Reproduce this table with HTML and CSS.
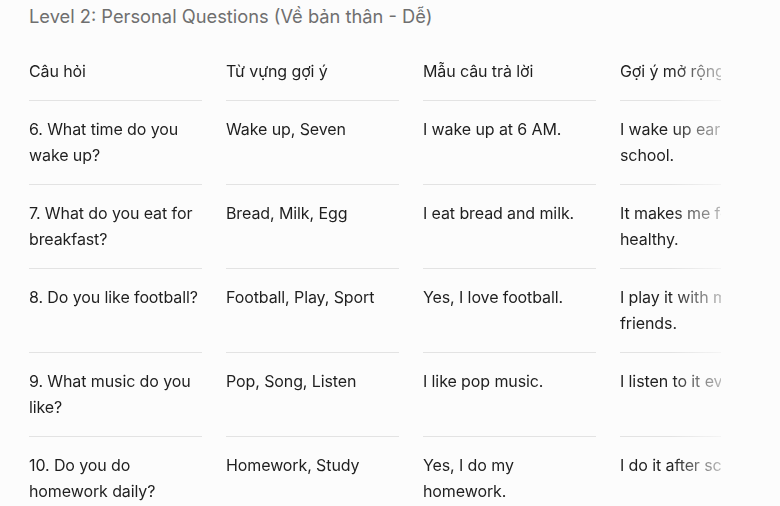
FILE: index.html
```html
<!DOCTYPE html>
<html lang="vi">
<head>
<meta charset="utf-8">
<link rel="stylesheet" href="styles.css">
</head>
<body>
<main class="page">
  <h3 class="title">Level 2: Personal Questions (Về bản thân - Dễ)</h3>
  <div class="scroller">
    <div class="table">
      <div class="cell head">Câu hỏi</div>
      <div class="cell head">Từ vựng gợi ý</div>
      <div class="cell head">Mẫu câu trả lời</div>
      <div class="cell head">Gợi ý mở rộng</div>

      <div class="cell">6. What time do you wake up?</div>
      <div class="cell">Wake up, Seven</div>
      <div class="cell">I wake up at 6 AM.</div>
      <div class="cell">I wake up early for school.</div>

      <div class="cell">7. What do you eat for breakfast?</div>
      <div class="cell">Bread, Milk, Egg</div>
      <div class="cell">I eat bread and milk.</div>
      <div class="cell">It makes me feel healthy.</div>

      <div class="cell">8. Do you like football?</div>
      <div class="cell">Football, Play, Sport</div>
      <div class="cell">Yes, I love football.</div>
      <div class="cell">I play it with my friends.</div>

      <div class="cell">9. What music do you like?</div>
      <div class="cell">Pop, Song, Listen</div>
      <div class="cell">I like pop music.</div>
      <div class="cell">I listen to it every day.</div>

      <div class="cell">10. Do you do homework daily?</div>
      <div class="cell">Homework, Study</div>
      <div class="cell">Yes, I do my homework.</div>
      <div class="cell">I do it after school.</div>
    </div>
  </div>
</main>
</body>
</html>
```
FILE: styles.css
```css
html, body {
  margin: 0;
  padding: 0;
  background: #fcfcfc;
}
body {
  font-family: Inter, "Noto Sans", sans-serif;
  color: #1f1f1f;
  overflow: hidden;
}
.page {
  padding-left: 29px;
}
.title {
  box-sizing: border-box;
  margin: 0;
  padding-top: 2px;
  height: 43px;
  font-size: 18.3px;
  line-height: 28px;
  font-weight: 400;
  color: #6f6f6f;
}
.scroller {
  width: 692px;
  overflow: hidden;
  -webkit-mask-image: linear-gradient(to right, #000 calc(100% - 50px), rgba(0, 0, 0, 0.3));
  mask-image: linear-gradient(to right, #000 calc(100% - 50px), rgba(0, 0, 0, 0.3));
}
.table {
  display: grid;
  grid-template-columns: repeat(4, 173px);
  column-gap: 24px;
  width: max-content;
}
.cell {
  padding: 15px 0 16px;
  border-bottom: 1px solid #e3e3e3;
  font-size: 16px;
  line-height: 26px;
  letter-spacing: -0.1px;
}
```
